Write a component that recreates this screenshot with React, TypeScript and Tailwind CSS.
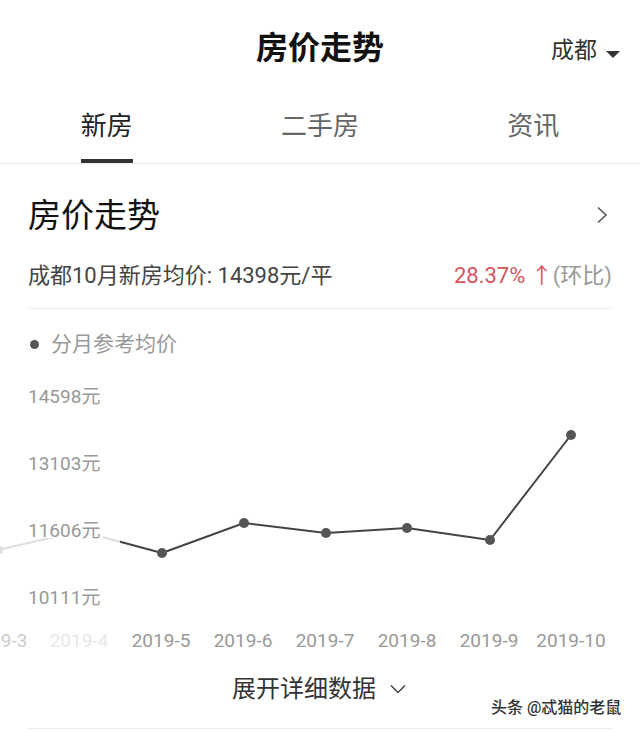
import React from 'react';

const FONT = "Roboto, 'Noto Sans CJK SC', sans-serif";

const points: [number, number][] = [
  [-2, 180],
  [80, 161],
  [162, 183],
  [244, 153],
  [326, 163],
  [407, 158],
  [490, 170],
  [571, 65],
];

const xLabels = [
  { x: -2, text: '2019-3', fill: '#cccccc' },
  { x: 79, text: '2019-4', fill: '#e8e8e8' },
  { x: 161, text: '2019-5', fill: '#999999' },
  { x: 243, text: '2019-6', fill: '#999999' },
  { x: 325, text: '2019-7', fill: '#999999' },
  { x: 407, text: '2019-8', fill: '#999999' },
  { x: 489, text: '2019-9', fill: '#999999' },
  { x: 571, text: '2019-10', fill: '#999999' },
];

const yLabels = [
  { y: 33, text: '14598元' },
  { y: 100, text: '13103元' },
  { y: 167, text: '11606元' },
  { y: 234, text: '10111元' },
];

const TrendChart = () => (
  <svg width={640} height={290} viewBox="0 0 640 290" className="block" style={{ fontFamily: FONT }}>
    <polyline
      points={points.map((p) => p.join(',')).join(' ')}
      fill="none"
      stroke="#444"
      strokeWidth={2}
      strokeLinejoin="round"
    />
    {points.map(([x, y]) => (
      <circle key={x} cx={x} cy={y} r={5} fill="#555" />
    ))}
    {/* faded part on the left, scrolled out of view */}
    <rect x={0} y={0} width={120} height={260} fill="#fff" fillOpacity={0.82} />
    {yLabels.map((l) => (
      <g key={l.text}>
        <rect x={27} y={l.y - 14} width={76} height={15} fill="#fff" />
        <text x={28} y={l.y} fontSize={19} fill="#999">
          {l.text}
        </text>
      </g>
    ))}
    {xLabels.map((l) => (
      <text key={l.text} x={l.x} y={277} fontSize={19} fill={l.fill} textAnchor="middle">
        {l.text}
      </text>
    ))}
  </svg>
);

export default function App() {
  return (
    <div className="w-[640px] h-[732px] overflow-hidden bg-white relative" style={{ fontFamily: FONT }}>
      <div className="grid grid-cols-[1fr_auto_1fr] h-[96px] items-center">
        <div />
        <h1 className="text-[32px] font-bold leading-none text-[#111]">房价走势</h1>
        <div className="justify-self-end flex items-center pr-[20px] mt-[4px]">
          <span className="text-[23px] leading-none text-[#333]">成都</span>
          <svg width="14" height="7" viewBox="0 0 14 7" className="ml-[9px] mt-[8px]">
            <path d="M0 0h14L7 7z" fill="#333" />
          </svg>
        </div>
      </div>

      <div className="grid grid-cols-3 h-[68px] border-b border-[#eeeeee]">
        {['新房', '二手房', '资讯'].map((t, i) => (
          <div key={t} className="flex flex-col items-center justify-between h-full">
            <span className={`mt-[17px] text-[26px] leading-[26px] ${i === 0 ? 'text-[#222]' : 'text-[#666]'}`}>
              {t}
            </span>
            {i === 0 ? <div className="w-[52px] h-[4px] bg-[#333]" /> : <div />}
          </div>
        ))}
      </div>

      <div className="px-[28px]">
        <div className="flex items-center justify-between h-[50px] mt-[26px]">
          <h2 className="text-[33px] leading-none text-[#111]">房价走势</h2>
          <svg width="12" height="18" viewBox="0 0 12 18" className="mr-[4px]">
            <path d="M2 1.5l8 7.5-8 7.5" fill="none" stroke="#555" strokeWidth="1.6" />
          </svg>
        </div>

        <div className="flex items-center justify-between h-[30px] mt-[21px] text-[22px] leading-none">
          <span className="text-[#444]">成都10月新房均价: 14398元/平</span>
          <span>
            <span className="text-[#d4555e]">28.37% ↑</span>
            <span className="text-[#999]">(环比)</span>
          </span>
        </div>

        <div className="h-px bg-[#eeeeee] mt-[17px]" />

        <div className="flex items-center h-[24px] mt-[23px]">
          <span className="w-[9px] h-[9px] rounded-full bg-[#555] ml-[2px]" />
          <span className="ml-[12px] text-[21px] leading-none text-[#999]">分月参考均价</span>
        </div>

        <div className="-mx-[28px] mt-[14px]">
          <TrendChart />
        </div>

        <div className="flex items-center justify-center h-[30px] mt-[14px] pr-[2px]">
          <span className="text-[24px] leading-none text-[#333]">展开详细数据</span>
          <svg width="16" height="10" viewBox="0 0 16 10" className="ml-[14px]">
            <path d="M1 1.5l7 7 7-7" fill="none" stroke="#444" strokeWidth="1.5" />
          </svg>
        </div>

        <div className="h-px bg-[#eeeeee] mt-[24px]" />
      </div>

      <div
        className="absolute left-[491px] top-[700px] text-[16px] font-medium leading-none text-[#333]"
        style={{ textShadow: '0 0 2px #fff, 0 0 2px #fff' }}
      >
        头条 @忒猫的老鼠
      </div>
    </div>
  );
}
